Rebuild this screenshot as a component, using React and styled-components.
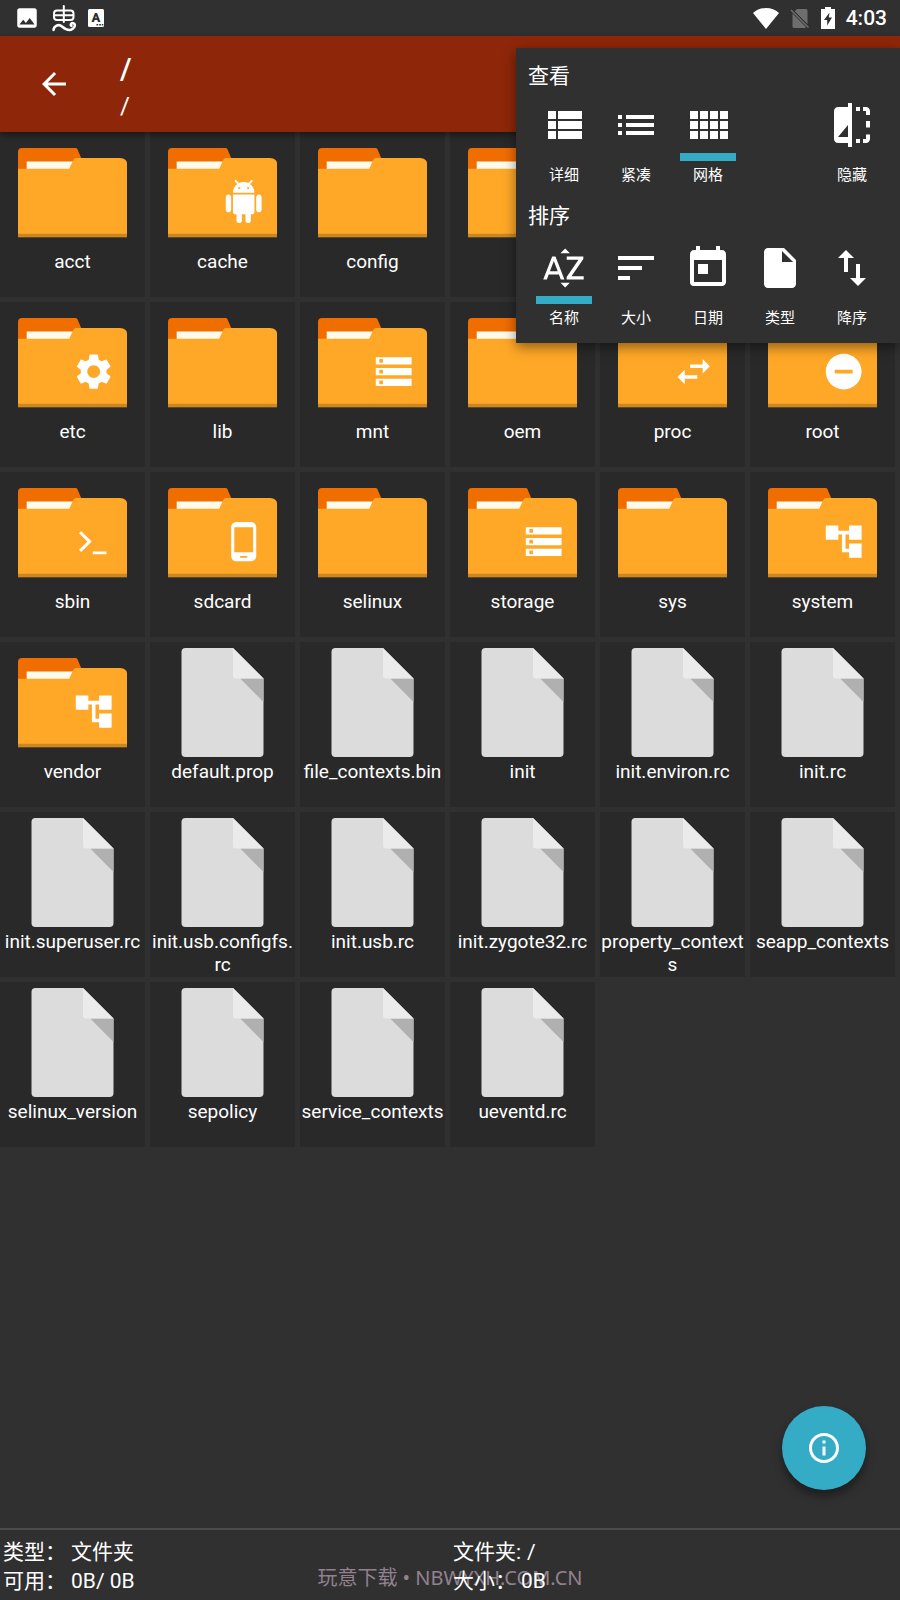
import React, { useState } from "react";
import styled, { createGlobalStyle, ThemeProvider } from "styled-components";
import {
  MdAccountTree,
  MdArrowBack,
  MdImage,
  MdInfoOutline,
  MdInsertDriveFile,
  MdPhoneAndroid,
  MdRemoveCircle,
  MdSettings,
  MdSort,
  MdSortByAlpha,
  MdStorage,
  MdSwapHoriz,
  MdSwapVert,
  MdToday,
} from "react-icons/md";

const theme = {
  color: {
    page: "#303030",
    tile: "#292929",
    bar: "#8e2709",
    accent: "#35acc6",
    line: "#4c4c4c",
    text: "#fff",
    mark: "#93818f",
  },
  font: 'Roboto, "Noto Sans CJK SC", sans-serif',
};

const folders = [
  { name: "acct" },
  { name: "cache", badge: "android" },
  { name: "config" },
  { name: "d" },
  { name: "data" },
  { name: "dev" },
  { name: "etc", badge: "settings" },
  { name: "lib" },
  { name: "mnt", badge: "storage" },
  { name: "oem" },
  { name: "proc", badge: "swap" },
  { name: "root", badge: "remove" },
  { name: "sbin", badge: "terminal" },
  { name: "sdcard", badge: "phone" },
  { name: "selinux" },
  { name: "storage", badge: "storage" },
  { name: "sys" },
  { name: "system", badge: "tree" },
  { name: "vendor", badge: "tree" },
];

const files = [
  "default.prop",
  "file_contexts.bin",
  "init",
  "init.environ.rc",
  "init.rc",
  "init.superuser.rc",
  "init.usb.configfs.rc",
  "init.usb.rc",
  "init.zygote32.rc",
  "property_contexts",
  "seapp_contexts",
  "selinux_version",
  "sepolicy",
  "service_contexts",
  "ueventd.rc",
];

const Glyph = ({ d, size, ...rest }) => (
  <svg viewBox="0 0 24 24" width={size} height={size} fill="currentColor" {...rest}>
    <path d={d} />
  </svg>
);

const AndroidIcon = (props) => (
  <Glyph
    {...props}
    d="M6 18c0 .55.45 1 1 1h1v3.5c0 .83.67 1.5 1.5 1.5s1.5-.67 1.5-1.5V19h2v3.5c0 .83.67 1.5 1.5 1.5s1.5-.67 1.5-1.5V19h1c.55 0 1-.45 1-1V8H6v10zM3.5 8C2.67 8 2 8.67 2 9.5v7c0 .83.67 1.5 1.5 1.5S5 17.33 5 16.5v-7C5 8.67 4.33 8 3.5 8zm17 0c-.83 0-1.5.67-1.5 1.5v7c0 .83.67 1.5 1.5 1.5s1.5-.67 1.5-1.5v-7c0-.83-.67-1.5-1.5-1.5zm-4.97-5.84l1.3-1.3c.2-.2.2-.51 0-.71-.2-.2-.51-.2-.71 0l-1.48 1.48C13.85 1.23 12.95 1 12 1c-.96 0-1.86.23-2.66.63L7.85.15c-.2-.2-.51-.2-.71 0-.2.2-.2.51 0 .71l1.31 1.31C6.97 3.26 6 5.01 6 7h12c0-1.99-.97-3.75-2.47-4.84zM10 5H9V4h1v1zm5 0h-1V4h1v1z"
  />
);

const TerminalIcon = ({ size, ...rest }) => (
  <svg viewBox="0 0 24 24" width={size} height={size} fill="none" stroke="currentColor" {...rest}>
    <path d="M4.4 6.8l5.3 5.2-5.3 5.2" strokeWidth="1.7" />
    <path d="M11.5 18.3h7.6" strokeWidth="1.6" />
  </svg>
);

const DetailIcon = (props) => (
  <Glyph
    {...props}
    d="M4 14h4v-4H4v4zm0 5h4v-4H4v4zM4 9h4V5H4v4zm5 5h12v-4H9v4zm0 5h12v-4H9v4zM9 5v4h12V5H9z"
  />
);

const CompactIcon = (props) => (
  <Glyph
    {...props}
    d="M3 13h2v-2H3v2zm0 4h2v-2H3v2zm0-8h2V7H3v2zm4 4h14v-2H7v2zm0 4h14v-2H7v2zM7 7v2h14V7H7z"
  />
);

const GridIcon = (props) => (
  <Glyph
    {...props}
    d="M3 9h4V5H3v4zm0 5h4v-4H3v4zm5 0h4v-4H8v4zm5 0h4v-4h-4v4zM8 9h4V5H8v4zm5-4v4h4V5h-4zm5 9h4v-4h-4v4zM3 19h4v-4H3v4zm5 0h4v-4H8v4zm5 0h4v-4h-4v4zm5 0h4v-4h-4v4zm0-14v4h4V5h-4z"
  />
);

const HiddenIcon = (props) => (
  <Glyph
    {...props}
    d="M10 3H5c-1.1 0-2 .9-2 2v14c0 1.1.9 2 2 2h5v2h2V1h-2v2zm0 15H5l5-6v6zM14 3h2v2h-2zM17.5 3H19c1.1 0 2 .9 2 2v2h-2V5h-1.5zM19 10h2v3.3h-2zM19 16.8h2V19c0 1.1-.9 2-2 2h-1.5v-2H19zM14 19h2v2h-2z"
  />
);

const WormIcon = () => (
  <svg width="24" height="28" viewBox="1 0 24 28" fill="none" stroke="#fff" strokeLinecap="round">
    <path
      d="M12.800 2v16M6 6.500h13.500q3 0 3 3v3.500q0 3-3 3H6q-3 0-3-3V9.500q0-3 3-3zM3.500 11.300h18.500"
      strokeWidth="2"
    />
    <path d="M2.500 26c.5-4 5-6.500 8.500-3.500s7.500 4.500 10.500 2.500 3-5.300.7-5.800-3 2-1.700 2.700" strokeWidth="2.500" />
  </svg>
);

const InputIcon = () => (
  <svg width="16" height="18" viewBox="0 0 16 18">
    <rect width="16" height="18" rx="1.500" fill="#fff" />
    <text x="8" y="13" fontSize="13" fontWeight="900" fontFamily="Roboto" textAnchor="middle" fill="#303030">
      A
    </text>
    <path d="M8.500 15.800h1.700M11.200 15.800h1.700M13.800 15.800h1.500" stroke="#303030" strokeWidth="1.500" />
  </svg>
);

const WifiIcon = () => (
  <svg width="26" height="21" viewBox="0 0 26 21">
    <path d="M13 21L0 5Q5.500 0 13 0t13 5z" fill="#fff" />
  </svg>
);

const NoSimIcon = () => (
  <svg width="20" height="21" viewBox="0 0 20 21">
    <path d="M7 1h9q1.500 0 1.500 1.500v14L4.500 3.500zM2.500 5.500L16 19q-.5 1-1.500 1H4q-1.500 0-1.500-1.500z" fill="#6e6e6e" />
    <path d="M1 2l17.500 17.500" stroke="#6e6e6e" strokeWidth="1.500" />
    <path d="M2.200 1.200L19 18" stroke="#303030" strokeWidth="1" />
  </svg>
);

const BatteryIcon = () => (
  <svg width="14" height="22" viewBox="0 0 14 22">
    <path d="M4 0h6v2h4v20H0V2h4z" fill="#fff" />
    <path d="M8.500 5.500L3 13h3.200v5.500L11 10.500H7.800z" fill="#303030" />
  </svg>
);

const badges = {
  android: AndroidIcon,
  settings: MdSettings,
  storage: MdStorage,
  swap: MdSwapHoriz,
  remove: MdRemoveCircle,
  terminal: TerminalIcon,
  phone: MdPhoneAndroid,
  tree: MdAccountTree,
};

function FolderIcon({ badge }) {
  const Badge = badges[badge];
  return (
    <Picture viewBox="0 0 109 109" aria-hidden="true">
      <path d="M0 32V14q0-4 4-4h53.500q1.500 0 2 1.200L64 22v10z" fill="#f06d00" />
      <path d="M8.700 23.500h48L53 33H8.700z" fill="#fffaec" />
      <path d="M0 30.700h51.200L55.500 21.500q.8-1.500 2.500-1.500H102q7 .5 7 5.500v73.700H0z" fill="#ffa827" />
      <path d="M0 95.700h109v3.300H0z" fill="#cd8721" />
      {Badge && <Badge x="54.200" y="42.100" size={43} color="#fff" />}
    </Picture>
  );
}

function FileIcon() {
  return (
    <Picture viewBox="0 0 109 109" aria-hidden="true">
      <path d="M17.500 0H65l30.500 30.500V105q0 4-4 4h-74q-4 0-4-4V4q0-4 4-4z" fill="#dcdcdc" />
      <path d="M65 0l30.500 30.500H68q-3 0-3-3z" fill="#ebebeb" />
      <path d="M72.500 30.800h23V54z" fill="#b0b0b0" />
    </Picture>
  );
}

function Entry({ name, children }) {
  return (
    <li>
      <Tile type="button">
        {children}
        <Label>{name}</Label>
      </Tile>
    </li>
  );
}

function Option({ icon: Icon, label, active, onClick }) {
  return (
    <OptionButton type="button" aria-pressed={active} onClick={onClick}>
      <Icon size={48} />
      <Marker $active={active} />
      {label}
    </OptionButton>
  );
}

const views = [
  { label: "详细", icon: DetailIcon },
  { label: "紧凑", icon: CompactIcon },
  { label: "网格", icon: GridIcon },
];

const sorts = [
  { label: "名称", icon: MdSortByAlpha },
  { label: "大小", icon: MdSort },
  { label: "日期", icon: MdToday },
  { label: "类型", icon: MdInsertDriveFile },
];

function Menu() {
  const [view, setView] = useState("网格");
  const [sort, setSort] = useState("名称");
  const [hidden, setHidden] = useState(false);
  const [reverse, setReverse] = useState(false);

  return (
    <Panel>
      <MenuTitle>查看</MenuTitle>
      <Options>
        {views.map((v) => (
          <Option key={v.label} {...v} active={view === v.label} onClick={() => setView(v.label)} />
        ))}
        <span />
        <Option label="隐藏" icon={HiddenIcon} active={hidden} onClick={() => setHidden(!hidden)} />
      </Options>
      <MenuTitle>排序</MenuTitle>
      <Options>
        {sorts.map((s) => (
          <Option key={s.label} {...s} active={sort === s.label} onClick={() => setSort(s.label)} />
        ))}
        <Option label="降序" icon={MdSwapVert} active={reverse} onClick={() => setReverse(!reverse)} />
      </Options>
    </Panel>
  );
}

function App() {
  return (
    <ThemeProvider theme={theme}>
      <GlobalStyle />
      <Screen>
        <StatusBar>
          <StatusGroup $gap="12px">
            <MdImage size={26} />
            <WormIcon />
            <InputIcon />
          </StatusGroup>
          <StatusGroup $gap="11px">
            <WifiIcon />
            <NoSimIcon />
            <BatteryIcon />
            <Clock>4:03</Clock>
          </StatusGroup>
        </StatusBar>
        <Header>
          <BackButton type="button" aria-label="Back">
            <MdArrowBack size={36} />
          </BackButton>
          <Location>
            <Title>/</Title>
            <Path>/</Path>
          </Location>
        </Header>
        <Content>
          <Grid>
            {folders.map((f) => (
              <Entry key={f.name} name={f.name}>
                <FolderIcon badge={f.badge} />
              </Entry>
            ))}
            {files.map((name) => (
              <Entry key={name} name={name}>
                <FileIcon />
              </Entry>
            ))}
          </Grid>
          <InfoButton type="button" aria-label="Info">
            <MdInfoOutline size={36} />
          </InfoButton>
        </Content>
        <Footer>
          <Watermark>玩意下载 • NBWYXH.COM.CN</Watermark>
          <Facts>
            <dt>类型：</dt>
            <dd>文件夹</dd>
            <dt>可用：</dt>
            <dd>0B/ 0B</dd>
          </Facts>
          <Facts>
            <dt>文件夹:</dt>
            <Near>/</Near>
            <dt>大小：</dt>
            <dd>0B</dd>
          </Facts>
        </Footer>
        <Menu />
      </Screen>
    </ThemeProvider>
  );
}

const GlobalStyle = createGlobalStyle`
  * {
    box-sizing: border-box;
  }
  body {
    margin: 0;
    background: ${(props) => props.theme.color.page};
    color: ${(props) => props.theme.color.text};
    font-family: ${(props) => props.theme.font};
  }
  button {
    border: 0;
    padding: 0;
    background: none;
    color: inherit;
    font: inherit;
    cursor: pointer;
  }
`;

const Screen = styled.div`
  position: relative;
  display: flex;
  flex-direction: column;
  min-height: 100vh;
`;

const StatusBar = styled.div`
  display: flex;
  align-items: center;
  justify-content: space-between;
  height: 36px;
  padding: 0 13px 0 14px;
`;

const StatusGroup = styled.div`
  display: flex;
  align-items: center;
  gap: ${(props) => props.$gap};
`;

const Clock = styled.time`
  font-size: 21px;
  font-weight: 500;
  line-height: 36px;
`;

const Header = styled.header`
  position: relative;
  z-index: 1;
  display: flex;
  align-items: center;
  gap: 48px;
  height: 96px;
  padding: 0 36px;
  background: ${(props) => props.theme.color.bar};
  box-shadow: 0 3px 6px rgba(0, 0, 0, 0.4);
`;

const BackButton = styled.button`
  display: flex;
`;

const Location = styled.div`
  padding-top: 4px;
`;

const Title = styled.h1`
  margin: 0 0 4px;
  font-size: 30px;
  font-weight: 500;
  line-height: 36px;
`;

const Path = styled.p`
  margin: 0;
  font-size: 24px;
  line-height: 30px;
`;

const Content = styled.main`
  position: relative;
  flex: 1;
`;

const Grid = styled.ul`
  display: grid;
  grid-template-columns: repeat(6, minmax(0, 1fr));
  gap: 5px;
  margin: 0;
  padding: 0 5px 0 0;
  list-style: none;
`;

const Tile = styled.button`
  display: flex;
  flex-direction: column;
  align-items: center;
  width: 100%;
  min-height: 165px;
  padding-top: 6px;
  background: ${(props) => props.theme.color.tile};
`;

const Picture = styled.svg`
  width: 109px;
  height: 109px;
`;

const Label = styled.span`
  max-width: 100%;
  margin-top: 3px;
  font-size: 19px;
  line-height: 23px;
  text-align: center;
  word-break: break-all;
`;

const InfoButton = styled.button`
  position: absolute;
  right: 34px;
  bottom: 38px;
  display: flex;
  align-items: center;
  justify-content: center;
  width: 84px;
  height: 84px;
  border-radius: 50%;
  background: ${(props) => props.theme.color.accent};
  box-shadow: 0 6px 10px rgba(0, 0, 0, 0.4);
`;

const Footer = styled.footer`
  position: relative;
  display: grid;
  grid-template-columns: 1fr 1fr;
  padding: 8px 0 4px;
  border-top: 2px solid ${(props) => props.theme.color.line};
  font-size: 21px;
  line-height: 29px;
`;

const Facts = styled.dl`
  position: relative;
  display: grid;
  grid-template-columns: 68px 1fr;
  margin: 0;
  padding-left: 3px;
  white-space: nowrap;

  dd {
    margin: 0;
  }
`;

const Near = styled.dd`
  padding-left: 6px;
`;

const Watermark = styled.span`
  position: absolute;
  right: 0;
  bottom: 8px;
  left: 0;
  color: ${(props) => props.theme.color.mark};
  font-family: "Noto Sans", "Noto Sans CJK SC", sans-serif;
  font-size: 20px;
  line-height: 28px;
  text-align: center;
`;

const Panel = styled.section`
  position: absolute;
  z-index: 2;
  top: 48px;
  right: 0;
  width: 384px;
  padding: 14px 12px 15px;
  background: ${(props) => props.theme.color.page};
  box-shadow: 0 4px 12px rgba(0, 0, 0, 0.45);
`;

const MenuTitle = styled.h2`
  margin: 0 0 11px;
  font-size: 21px;
  font-weight: 400;
  line-height: 28px;
`;

const Options = styled.div`
  display: grid;
  grid-template-columns: repeat(5, 1fr);

  & + ${MenuTitle} {
    margin: 17px 0 14px;
  }
`;

const OptionButton = styled.button`
  display: flex;
  flex-direction: column;
  align-items: center;
  font-size: 15px;
  line-height: 20px;
`;

const Marker = styled.span`
  width: 56px;
  height: 8px;
  margin: 4px 0;
  background: ${(props) => (props.$active ? props.theme.color.accent : "transparent")};
`;

export default App;
